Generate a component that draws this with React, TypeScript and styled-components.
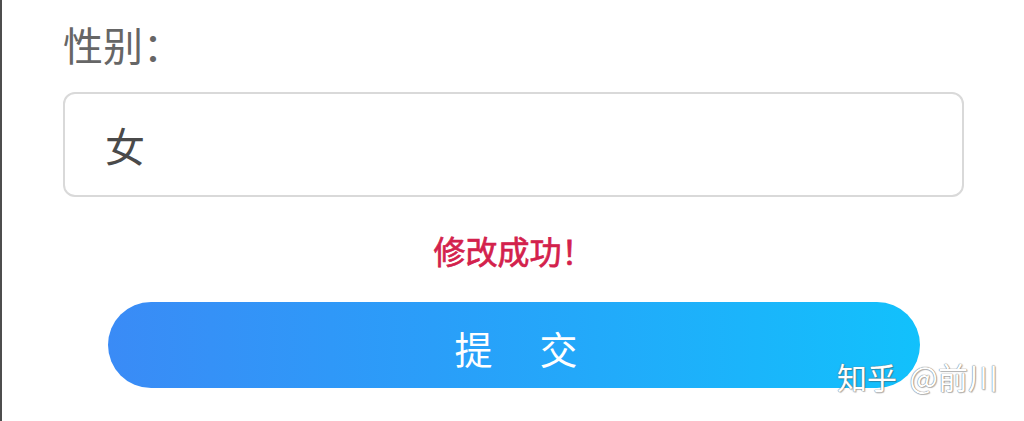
import React from 'react';
import styled, { createGlobalStyle } from 'styled-components';

const GlobalStyle = createGlobalStyle`
    html, body {
        margin: 0;
        padding: 0;
        background: #fff;
    }
    body {
        font-family: "Noto Sans CJK SC", "Noto Sans", sans-serif;
    }
`

// Whole page, with the dark edge on the left
const Page = styled.div`
    position: relative;
    box-sizing: border-box;
    height: 421px;
    overflow: hidden;
    border-left: 2px solid #4d4d4d;
    padding: 24px 60px 0 61px;
    display: flex;
    flex-direction: column;
`

const Label = styled.div`
    font-size: 40px;
    line-height: 40px;
    color: #666;
`

// Input box
const Field = styled.div`
    box-sizing: border-box;
    margin-top: 28px;
    height: 105px;
    border: 2px solid #d9d9d9;
    border-radius: 12px;
    padding-left: 40px;
    display: flex;
    align-items: center;
    font-size: 40px;
    color: #4a4a4a;
`

const Message = styled.div`
    margin-top: 37px;
    text-align: center;
    font-size: 32px;
    line-height: 32px;
    font-weight: 400;
    color: #d3214c;
    -webkit-text-stroke: 0.7px #d3214c;
`

// Submit button
const Submit = styled.button`
    box-sizing: border-box;
    margin: 36px 44px 0 45px;
    height: 86px;
    border: none;
    border-radius: 43px;
    background: linear-gradient(90deg, #3a8bf6 0%, #2a9ef9 40%, #12c1fc 100%);
    color: #fff;
    font-family: inherit;
    font-size: 38px;
    display: flex;
    align-items: center;
    justify-content: center;
    gap: 47px;
    padding: 4px 0 0 4px;
`

// Watermark in the corner
const Watermark = styled.div`
    position: absolute;
    right: 26px;
    bottom: 30px;
    font-size: 30px;
    line-height: 30px;
    word-spacing: 6px;
    color: #fff;
    text-shadow: 0 0 1px #777, 0 0 1px #777, 1px 1px 1px rgba(0, 0, 0, 0.25);
    white-space: nowrap;
`

const App = () => {
    return (
        <>
            <GlobalStyle />
            <Page>
                <Label>性别：</Label>
                <Field>女</Field>
                <Message>修改成功！</Message>
                <Submit>
                    <span>提</span>
                    <span>交</span>
                </Submit>
                <Watermark>知乎 @前川</Watermark>
            </Page>
        </>
    );
}

export default App;
